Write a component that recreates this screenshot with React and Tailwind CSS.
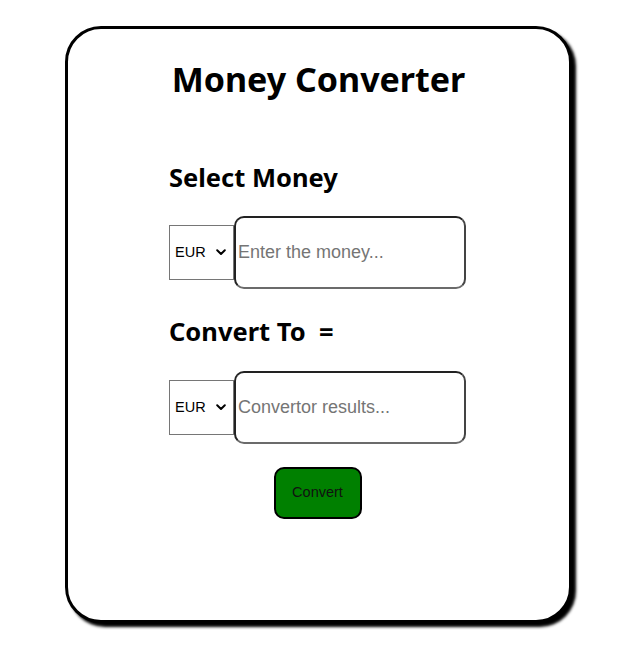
import React, { useState } from 'react';

const currencies = ['EUR', 'USD', 'GBP', 'JPY', 'TRY'];

const CurrencySelect = ({ value, onChange }) => (
  <div className="relative w-[65px] h-[55px] shrink-0">
    <select
      value={value}
      onChange={(e) => onChange(e.target.value)}
      className="appearance-none w-full h-full border border-[#767676] bg-white pl-[5px] text-[14.5px] text-black font-['Liberation_Sans',Arial,sans-serif] outline-none"
    >
      {currencies.map((c) => (
        <option key={c} value={c}>{c}</option>
      ))}
    </select>
    <svg
      className="pointer-events-none absolute right-[8px] top-[24px] w-[10px] h-[7px]"
      viewBox="0 0 10 7"
      fill="none"
    >
      <path d="M1.2 1.3 L5 5 L8.8 1.3" stroke="#000" strokeWidth="2" strokeLinecap="round" strokeLinejoin="round" />
    </svg>
  </div>
);

const App = () => {
  const [from, setFrom] = useState('EUR');
  const [to, setTo] = useState('EUR');
  const [amount, setAmount] = useState('');

  return (
    <div className="min-h-[662px] bg-white pt-[26px]">
      <div className="ml-[65px] w-[507px] h-[597px] bg-white border-[3px] border-black rounded-[36px] shadow-[4px_4px_3px_#000] font-['Noto_Sans','Open_Sans',sans-serif]">
        <h1 className="text-center text-[34px] font-bold leading-[44px] mt-[28px] text-black">
          Money Converter
        </h1>

        <div className="ml-[101px] w-[297px] mt-[60px]">
          <h2 className="text-[25.5px] font-bold leading-[32px] text-black">Select Money</h2>

          <div className="flex items-center mt-[23px]">
            <CurrencySelect value={from} onChange={setFrom} />
            <input
              value={amount}
              onChange={(e) => setAmount(e.target.value)}
              placeholder="Enter the money..."
              className="w-[232px] h-[73px] border-2 border-[#222] border-b-[#6b6b6b] border-r-[#444] rounded-[10px] pl-[2px] text-[18px] font-['Liberation_Sans',Arial,sans-serif] placeholder:text-[#757575] outline-none"
            />
          </div>

          <h2 className="text-[25.5px] font-bold leading-[32px] text-black mt-[26px]">Convert To&nbsp; =</h2>

          <div className="flex items-center mt-[24px]">
            <CurrencySelect value={to} onChange={setTo} />
            <input
              readOnly
              placeholder="Convertor results..."
              className="w-[232px] h-[73px] border-2 border-[#222] border-b-[#6b6b6b] border-r-[#444] rounded-[10px] pl-[2px] text-[18px] font-['Liberation_Sans',Arial,sans-serif] placeholder:text-[#757575] outline-none"
            />
          </div>

          <div className="flex justify-center mt-[23px]">
            <button className="w-[88px] h-[52px] bg-[#008000] border-2 border-black rounded-[10px] text-[14.5px] text-[#111] font-['Liberation_Sans',Arial,sans-serif]">
              Convert
            </button>
          </div>
        </div>
      </div>
    </div>
  );
};

export default App;
